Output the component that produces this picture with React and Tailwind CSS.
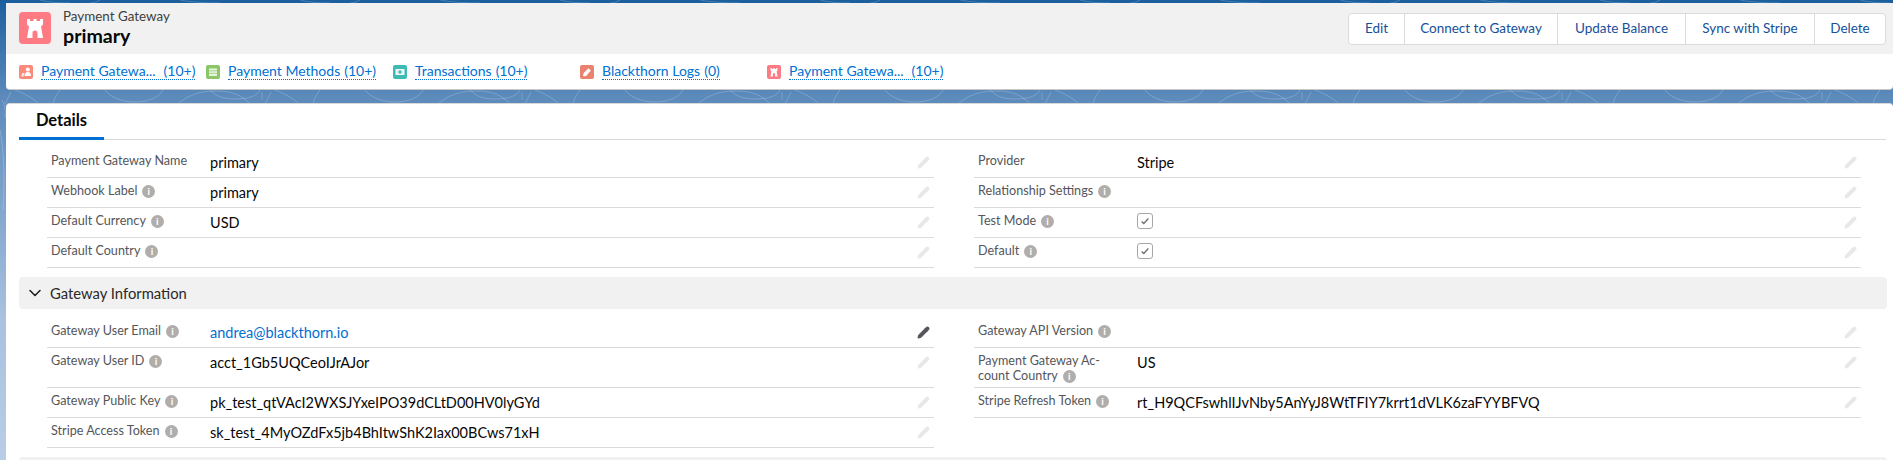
import React from 'react';
import { ChevronDown, Pencil } from 'lucide-react';

const font = { fontFamily: '"Lato", "Open Sans", sans-serif' };

const Castle = ({ className }) => (
  <svg viewBox="0 0 32 32" className={className}>
    <path d="M8 7h3v2h3.500V7h3v2H21V7h3v5.500l-2 2L24 26h-5.500v-5a2.500 2.500 0 0 0-5 0v5H8l2-11.500-2-2z" fill="#fff" />
  </svg>
);

const GlyphPeople = () => (
  <svg viewBox="0 0 14 14" className="w-full h-full">
    <circle cx="8.800" cy="4.500" r="2" fill="#fff" />
    <path d="M5.500 11c0-2.500 1.300-4 3.300-4s3.200 1.500 3.200 4z" fill="#fff" />
    <path d="M2.200 11.500l1.200-3.500h2l-1 3.500z" fill="#fff" opacity=".85" />
  </svg>
);

const GlyphTable = () => (
  <svg viewBox="0 0 14 14" className="w-full h-full">
    <path d="M3 3.500h8v7.500H3z" fill="#fff" opacity=".8" />
    <path d="M3 5.800h8M3 8.300h8" stroke="#8bc766" strokeWidth=".7" />
  </svg>
);

const GlyphCash = () => (
  <svg viewBox="0 0 14 14" className="w-full h-full">
    <path d="M2.500 4h9v6h-9z" fill="#fff" opacity=".9" />
    <circle cx="7" cy="7" r="1.700" fill="#3fbab3" />
  </svg>
);

const GlyphPencil = () => (
  <svg viewBox="0 0 14 14" className="w-full h-full">
    <path d="M3 11l.7-3 4.800-4.800 2.300 2.300L6 11.300z" fill="#fff" />
  </svg>
);

const relatedLinks = [
  { icon: <GlyphPeople />, color: 'bg-[#fb8a7a]', name: 'Payment Gatewa...', count: '(10+)', gap: true },
  { icon: <GlyphTable />, color: 'bg-[#8bc766]', name: 'Payment Methods', count: '(10+)' },
  { icon: <GlyphCash />, color: 'bg-[#3fbab3]', name: 'Transactions', count: '(10+)' },
  { icon: <GlyphPencil />, color: 'bg-[#ea8270]', name: 'Blackthorn Logs', count: '(0)' },
  { icon: <Castle className="w-full h-full" />, color: 'bg-[#ff7b84]', name: 'Payment Gatewa...', count: '(10+)', gap: true },
];

const actions = [
  { label: 'Edit', width: 'w-[55px]' },
  { label: 'Connect to Gateway', width: 'w-[153px]' },
  { label: 'Update Balance', width: 'w-[128px]' },
  { label: 'Sync with Stripe', width: 'w-[129px]' },
  { label: 'Delete', width: 'w-[71px]' },
];

const InfoDot = () => (
  <span className="inline-flex items-center justify-center w-[13px] h-[13px] ml-[5px] rounded-full bg-[#b0adab] text-white text-[10px] font-bold leading-none align-[0px] shrink-0">
    i
  </span>
);

const Check = () => (
  <span className="flex items-center justify-center w-4 h-4 rounded-[3px] border border-[#a9a7a5] bg-white">
    <svg viewBox="0 0 12 12" className="w-[10px] h-[10px]">
      <path d="M2 6.500l2.600 2.500L10 3" fill="none" stroke="#706e6b" strokeWidth="1.600" />
    </svg>
  </span>
);

const Field = ({ label, info, value, check, link, tall, activeEdit }) => (
  <div className={`flex items-start border-b border-[#dddbda] pl-1 ${tall ? 'h-10' : 'h-[30px]'}`}>
    <div className="w-[159px] pt-[5px] pr-1 text-[12.600px] leading-[15px] text-[#54565a]">
      {label}
      {info && <InfoDot />}
    </div>
    <div className={`flex-1 pt-[5px] text-[14.500px] leading-[19px] ${link ? 'text-[#0070d2]' : 'text-[#080707]'}`}>
      {check ? <Check /> : value}
    </div>
    <Pencil
      size={13}
      className={`mt-[8px] mr-[4px] ${activeEdit ? 'text-[#54565a] fill-[#54565a]' : 'text-[#e8e8e8] fill-[#e8e8e8]'}`}
    />
  </div>
);

const Column = ({ rows }) => <div className="flex flex-col">{rows.map((r, i) => <Field key={i} {...r} />)}</div>;

const SectionHeader = ({ title }) => (
  <div className="flex items-center h-8 ml-[13px] mr-[6px] rounded bg-[#f1f1f1] pl-[6px] text-[14.800px] text-[#2b2826]">
    <ChevronDown size={20} strokeWidth={1.800} className="mr-[5px] text-[#1c1b1a]" />
    {title}
  </div>
);

const detailsLeft = [
  { label: 'Payment Gateway Name', value: 'primary' },
  { label: 'Webhook Label', info: true, value: 'primary' },
  { label: 'Default Currency', info: true, value: 'USD' },
  { label: 'Default Country', info: true },
];

const detailsRight = [
  { label: 'Provider', value: 'Stripe' },
  { label: 'Relationship Settings', info: true },
  { label: 'Test Mode', info: true, check: true },
  { label: 'Default', info: true, check: true },
];

const gatewayLeft = [
  { label: 'Gateway User Email', info: true, value: 'andrea@blackthorn.io', link: true, activeEdit: true },
  { label: 'Gateway User ID', info: true, value: 'acct_1Gb5UQCeoIJrAJor', tall: true },
  { label: 'Gateway Public Key', info: true, value: 'pk_test_qtVAcI2WXSJYxeIPO39dCLtD00HV0lyGYd' },
  { label: 'Stripe Access Token', info: true, value: 'sk_test_4MyOZdFx5jb4BhItwShK2Iax00BCws71xH' },
];

const gatewayRight = [
  { label: 'Gateway API Version', info: true },
  { label: <>Payment Gateway Ac-<br />count Country</>, info: true, value: 'US', tall: true },
  { label: 'Stripe Refresh Token', info: true, value: 'rt_H9QCFswhlIJvNby5AnYyJ8WtTFIY7krrt1dVLK6zaFYYBFVQ' },
];

// faint contour lines that show through the gaps between the cards
const Contours = () => (
  <svg className="absolute inset-0 w-full h-full" viewBox="0 0 1893 460" preserveAspectRatio="none">
    {Array.from({ length: 8 }).map((_, i) => (
      <g key={i} transform={`translate(${i * 260} 0)`} fill="none" stroke="#ffffff" strokeOpacity=".2">
        <path d="M15 90c10 4 18 8 24 14M60 90c-4 5-6 9-7 14M105 90c6 8 18 12 30 12s24-4 28-12M210 90c6 6 12 9 26 9s22-4 24-9" />
        <path d="M178 104c10-9 22-13 38-13s26 4 34 13M5 104l6-12M262 92v8" />
        <path d="M40 0c8 2 16 3 30 3M100 0c-4 2-6 3-10 3M180 0c10 2 24 3 40 3" />
      </g>
    ))}
    <path d="M0 130c4 20 5 50 3 80M2 100c3 6 4 12 3 18" fill="none" stroke="#ffffff" strokeOpacity=".2" />
  </svg>
);

export default function App() {
  return (
    <div
      className="relative h-[460px] w-full overflow-hidden bg-[linear-gradient(to_bottom,#1b5f9e_0px,#5b8abb_96px,#a9c2df_320px,#b9cde5_460px)] pt-[3px] pl-[6px]"
      style={font}
    >
      <Contours />
      <div className="relative">
        <div className="flex items-center justify-between h-[51px] pl-[13px] pr-[7px] bg-[#f1f1f1]">
          <div className="flex items-center -mt-[1px]">
            <div className="w-8 h-8 rounded bg-[#ff7b84]">
              <Castle className="w-8 h-8" />
            </div>
            <div className="ml-3 -mt-[2px]">
              <div className="text-[13.400px] leading-[17px] text-[#3e3e3c]">Payment Gateway</div>
              <div className="text-[19.600px] leading-[21px] font-bold text-[#080707]">primary</div>
            </div>
          </div>
          <div className="flex h-8 rounded border border-[#dddbda] bg-white">
            {actions.map((a) => (
              <div
                key={a.label}
                className={`flex items-center justify-center ${a.width} border-l first:border-l-0 border-[#dddbda] text-[13.500px] text-[#16509a]`}
              >
                {a.label}
              </div>
            ))}
          </div>
        </div>

        <div className="flex items-start h-[36px] pl-[13px] pt-[11px] bg-white rounded-b border-b border-[#c9c7c5]">
          {relatedLinks.map((l, i) => (
            <div key={i} className="flex items-start w-[187px]">
              <span className={`w-[14px] h-[14px] rounded-[2px] ${l.color}`}>{l.icon}</span>
              <span className="ml-2 -mt-[2px] border-b border-dotted border-[#0070d2] text-[14px] leading-[15px] pb-[1px] text-[#0070d2]">
                {l.name}
                <span className={l.gap ? 'ml-2' : 'ml-1'}>{l.count}</span>
              </span>
            </div>
          ))}
        </div>

        <div className="mt-[13px] h-[360px] rounded-t bg-white border-t border-[#d8d8d8]">
          <div className="flex items-end h-[36px] ml-[13px] mr-[7px] border-b border-[#dddbda]">
            <div className="flex items-center justify-center w-[85px] h-[36px] -mb-[1px] border-b-[3px] border-[#0070d2] text-[16.500px] font-bold text-[#080707]">
              Details
            </div>
          </div>
          <div className="grid grid-cols-[887px_887px] gap-x-[40px] pl-[41px] mt-[8px]">
            <Column rows={detailsLeft} />
            <Column rows={detailsRight} />
          </div>
          <div className="mt-[9px]">
            <SectionHeader title="Gateway Information" />
          </div>
          <div className="grid grid-cols-[887px_887px] gap-x-[40px] pl-[41px] mt-[9px]">
            <Column rows={gatewayLeft} />
            <Column rows={gatewayRight} />
          </div>
          <div className="mt-[9px]">
            <SectionHeader title="" />
          </div>
        </div>
      </div>
    </div>
  );
}
